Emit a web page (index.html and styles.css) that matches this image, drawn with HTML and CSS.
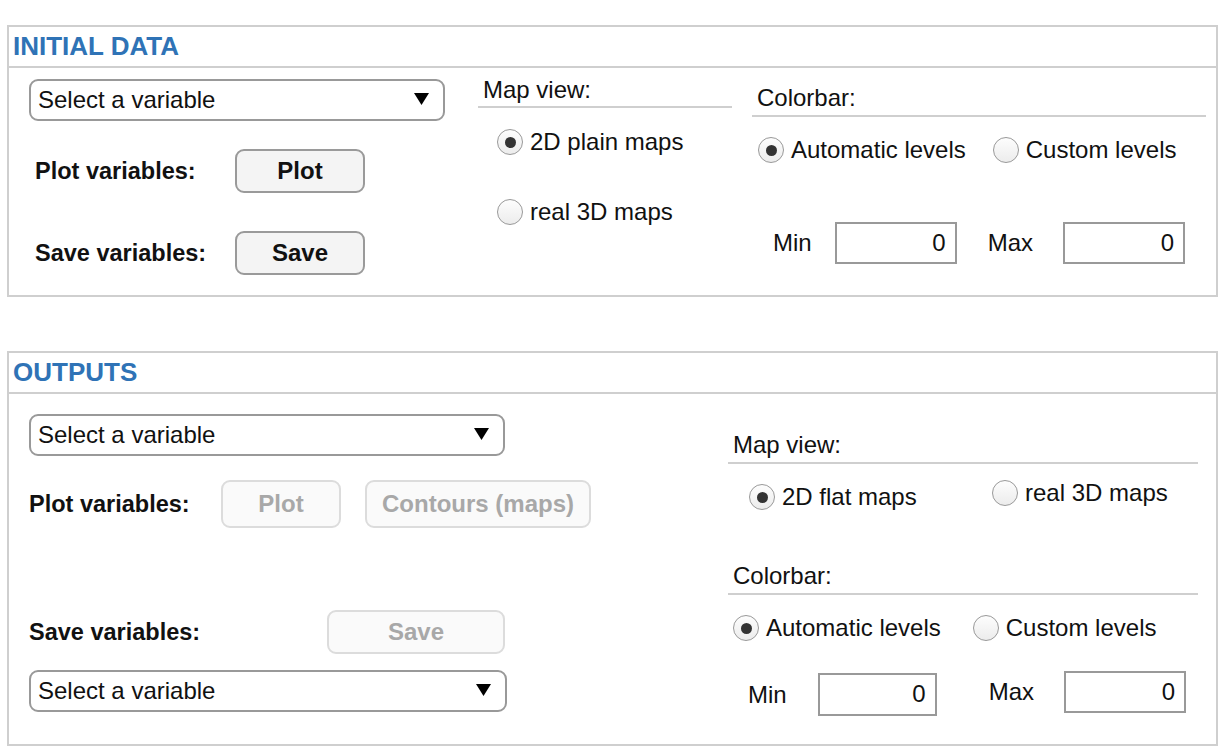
FILE: index.html
```html
<!DOCTYPE html>
<html lang="en">
<head>
<meta charset="utf-8">
<title>Data panels</title>
<link rel="stylesheet" href="styles.css">
</head>
<body>
<section class="panel panel-initial">
  <h2 class="panel-head">INITIAL DATA</h2>
  <div class="panel-body">
    <div class="col-left">
      <div class="select w416">
        <span>Select a variable</span>
        <svg class="arrow" width="15" height="12" viewBox="0 0 15 12"><path d="M0 0H15L7.5 12Z" fill="#000"/></svg>
      </div>
      <div class="action-row r1">
        <span class="act-label">Plot variables:</span>
        <button class="btn" type="button">Plot</button>
      </div>
      <div class="action-row r2">
        <span class="act-label">Save variables:</span>
        <button class="btn" type="button">Save</button>
      </div>
    </div>
    <div class="col-mid">
      <div class="group-label">Map view:</div>
      <div class="radio-stack">
        <label class="radio"><span class="dot on"></span><span>2D plain maps</span></label>
        <label class="radio"><span class="dot"></span><span>real 3D maps</span></label>
      </div>
    </div>
    <div class="col-right">
      <div class="group-label">Colorbar:</div>
      <div class="radio-row">
        <label class="radio"><span class="dot on"></span><span>Automatic levels</span></label>
        <label class="radio"><span class="dot"></span><span>Custom levels</span></label>
      </div>
      <div class="minmax">
        <span class="mm-label">Min</span>
        <span class="num">0</span>
        <span class="mm-label max">Max</span>
        <span class="num">0</span>
      </div>
    </div>
  </div>
</section>

<section class="panel panel-out">
  <h2 class="panel-head">OUTPUTS</h2>
  <div class="panel-body">
    <div class="col-left2">
      <div class="select w476">
        <span>Select a variable</span>
        <svg class="arrow" width="15" height="12" viewBox="0 0 15 12"><path d="M0 0H15L7.5 12Z" fill="#000"/></svg>
      </div>
      <div class="plot-row">
        <span class="act-label">Plot variables:</span>
        <button class="btn off b-plot" type="button">Plot</button>
        <button class="btn off b-cont" type="button">Contours (maps)</button>
      </div>
      <div class="save-row">
        <span class="act-label">Save variables:</span>
        <button class="btn off b-save" type="button">Save</button>
      </div>
      <div class="select w478">
        <span>Select a variable</span>
        <svg class="arrow" width="15" height="12" viewBox="0 0 15 12"><path d="M0 0H15L7.5 12Z" fill="#000"/></svg>
      </div>
    </div>
    <div class="col-right2">
      <div class="group-label">Map view:</div>
      <div class="radio-pair">
        <label class="radio flat"><span class="dot on"></span><span>2D flat maps</span></label>
        <label class="radio real"><span class="dot"></span><span>real 3D maps</span></label>
      </div>
      <div class="group-label cb2">Colorbar:</div>
      <div class="radio-row r2row">
        <label class="radio"><span class="dot on"></span><span>Automatic levels</span></label>
        <label class="radio"><span class="dot"></span><span>Custom levels</span></label>
      </div>
      <div class="minmax2">
        <div class="mm-group g-min">
          <span class="mm-label">Min</span>
          <span class="num n-min">0</span>
        </div>
        <div class="mm-group g-max">
          <span class="mm-label">Max</span>
          <span class="num">0</span>
        </div>
      </div>
    </div>
  </div>
</section>
</body>
</html>
```

FILE: styles.css
```css
* { box-sizing: border-box; }

html, body {
  margin: 0;
  padding: 0;
  background: #fff;
}

body {
  font-family: "Liberation Sans", Arial, sans-serif;
  font-size: 24px;
  line-height: 28px;
  color: #111;
  padding: 25px 10px 0 7px;
  width: 1228px;
}

.panel {
  width: 1211px;
  border: 2px solid #cfcfcf;
}

.panel-out {
  margin-top: 54px;
}

.panel-head {
  margin: 0;
  padding: 5px 4px 6px;
  font-size: 26px;
  line-height: 28px;
  font-weight: 700;
  color: #2f73b6;
  border-bottom: 2px solid #cfcfcf;
}

.panel-body {
  display: flex;
}

/* ---------- select ---------- */
.select {
  height: 42px;
  border: 2px solid #999;
  border-radius: 9px;
  display: flex;
  align-items: center;
  justify-content: space-between;
  padding: 0 14px 0 7px;
  background: #fff;
}
.select .arrow { display: block; margin-top: -2px; }
.w416 { width: 416px; }
.w476 { width: 476px; }
.w478 { width: 478px; }

/* ---------- buttons ---------- */
.btn {
  font-family: "Liberation Sans", Arial, sans-serif;
  font-size: 24px;
  font-weight: 700;
  color: #111;
  background: #f4f4f4;
  border: 2px solid #9a9a9a;
  border-radius: 9px;
  height: 44px;
  width: 130px;
  padding: 0;
}
.btn.off {
  color: #a8a8a8;
  background: #fafafa;
  border-color: #dcdcdc;
}

.act-label {
  font-weight: 700;
  font-size: 23.5px;
}

/* ---------- panel 1 columns ---------- */
.col-left {
  width: 469px;
  padding: 11px 0 20px 20px;
}
.action-row {
  display: grid;
  grid-template-columns: 200px 130px;
  align-items: center;
  padding-left: 6px;
}
.action-row.r1 { margin-top: 28px; }
.action-row.r2 { margin-top: 38px; }

.col-mid {
  width: 254px;
  padding-top: 8px;
}
.group-label {
  padding: 0 0 3px 5px;
  border-bottom: 2px solid #cfcfcf;
}
.col-mid .group-label { padding-bottom: 2px; }

.radio {
  display: flex;
  align-items: center;
  gap: 7px;
  white-space: nowrap;
}
.dot {
  width: 26px;
  height: 26px;
  border-radius: 50%;
  border: 1.5px solid #999;
  background: linear-gradient(#fdfdfd, #ececec);
  display: flex;
  align-items: center;
  justify-content: center;
  flex: none;
}
.dot.on::after {
  content: "";
  width: 11px;
  height: 11px;
  border-radius: 50%;
  background: #333;
}

.radio-stack {
  display: flex;
  flex-direction: column;
  gap: 42px;
  padding: 20px 0 0 19px;
}

.col-right {
  width: 454px;
  margin-left: 20px;
  padding-top: 16px;
}
.radio-row {
  display: flex;
  gap: 27px;
  padding: 19px 0 0 6px;
}

.minmax {
  display: flex;
  align-items: center;
  margin-top: 58px;
  padding-left: 21px;
}
.num {
  display: block;
  width: 122px;
  height: 42px;
  border: 2px solid #999;
  text-align: right;
  padding: 5px 9px 0 0;
  background: #fff;
  color: #111;
}
.mm-label { margin-right: 23px; }
.mm-label.max { margin-left: 31px; margin-right: 30px; }

/* ---------- panel 2 columns ---------- */
.col-left2 {
  width: 719px;
  padding: 20px 0 32px 20px;
}
.plot-row {
  display: flex;
  align-items: center;
  margin-top: 24px;
}
.plot-row .act-label { width: 192px; }
.b-plot { width: 120px; height: 48px; }
.b-cont { width: 226px; height: 48px; margin-left: 24px; }

.save-row {
  display: flex;
  align-items: center;
  margin-top: 82px;
}
.save-row .act-label { width: 298px; }
.b-save { width: 178px; }

.save-row + .select { margin-top: 16px; }

.col-right2 {
  width: 470px;
  padding-top: 37px;
}
.radio-pair {
  display: flex;
  align-items: flex-start;
  padding: 15px 0 0 21px;
}
.radio.flat { margin-top: 4px; width: 243px; }

.group-label.cb2 { margin-top: 51px; }
.r2row { gap: 32px; padding-left: 5px; }

.minmax2 {
  display: flex;
  align-items: flex-start;
  padding-left: 20px;
  margin-top: 29px;
}
.mm-group {
  display: flex;
  align-items: center;
}
.g-min { margin-top: 2px; }
.g-min .mm-label { margin-right: 31px; }
.n-min { width: 119px; height: 43px; }
.g-max { margin-left: 52px; }
.g-max .mm-label { margin-right: 30px; }
```
